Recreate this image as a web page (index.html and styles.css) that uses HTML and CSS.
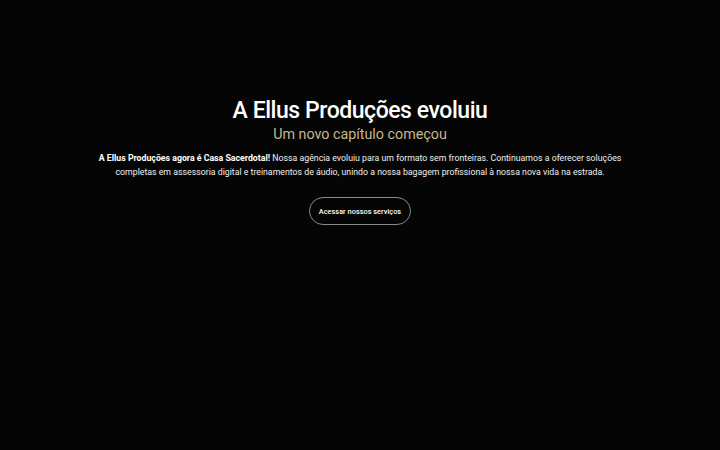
FILE: index.html
```html
<!DOCTYPE html>
<html lang="pt">
<head>
<meta charset="utf-8">
<link rel="stylesheet" href="styles.css">
</head>
<body>
<main class="hero">
  <h1 class="title">A Ellus Produções evoluiu</h1>
  <h2 class="subtitle">Um novo capítulo começou</h2>
  <p class="text"><strong>A Ellus Produções agora é Casa Sacerdotal!</strong> Nossa agência evoluiu para um formato sem fronteiras. Continuamos a oferecer soluções completas em assessoria digital e treinamentos de áudio, unindo a nossa bagagem profissional à nossa nova vida na estrada.</p>
  <a class="btn" href="#">Acessar nossos serviços</a>
</main>
</body>
</html>
```
FILE: styles.css
```css
html, body {
  margin: 0;
  padding: 0;
  background: #050505;
  height: 100%;
}
body {
  font-family: Roboto, "Liberation Sans", sans-serif;
  color: #fff;
}
.hero {
  display: flex;
  flex-direction: column;
  align-items: center;
  text-align: center;
  padding-top: 97px;
}
.title {
  margin: 0;
  font-size: 23px;
  font-weight: 500;
  line-height: 28px;
  letter-spacing: -0.45px;
}
.subtitle {
  margin: 0;
  font-size: 14.3px;
  font-weight: 400;
  line-height: 18px;
  color: #c8b78c;
}
.text {
  margin: 8px 0 0;
  max-width: 530px;
  font-size: 8.75px;
  line-height: 14px;
  color: #f0f0f0;
}
.text strong {
  font-weight: 700;
  color: #fff;
}
.btn {
  margin-top: 18px;
  display: inline-flex;
  align-items: center;
  justify-content: center;
  height: 26px;
  padding: 0 9px;
  border: 1px solid #8a8a8a;
  border-radius: 14px;
  color: #fff;
  text-decoration: none;
  font-size: 7.4px;
  font-weight: 500;
}
```
